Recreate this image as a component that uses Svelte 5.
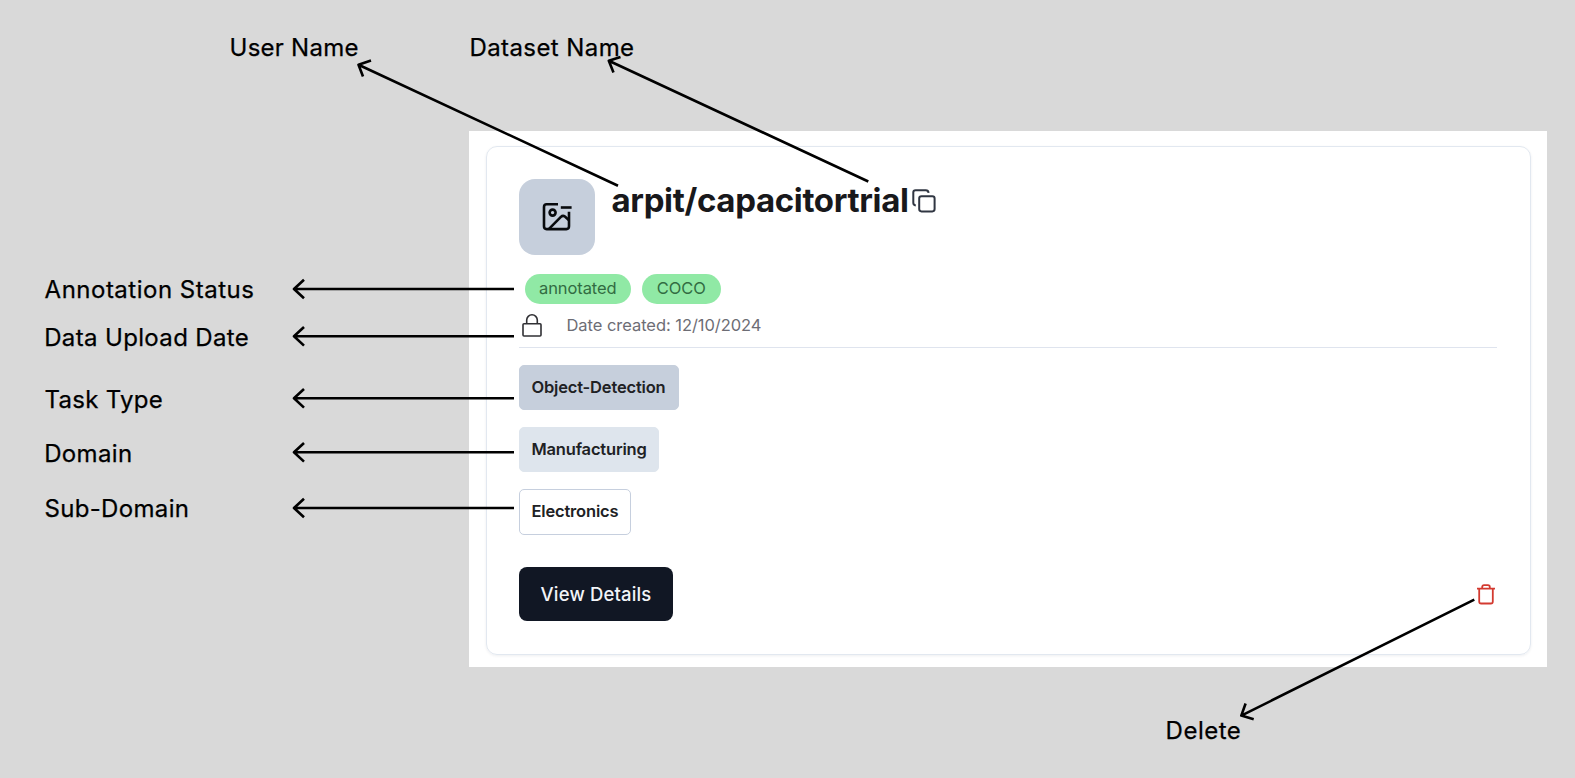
<script>
  const labels = [
    { text: 'User Name', x: 229.6, y: 33, spacing: 0.24 },
    { text: 'Dataset Name', x: 469.4, y: 33, spacing: 0.42 },
    { text: 'Annotation Status', x: 44.6, y: 275, spacing: 0.5 },
    { text: 'Data Upload Date', x: 44.2, y: 322.5, spacing: 0.35 },
    { text: 'Task Type', x: 44.6, y: 384.5, spacing: 0.28 },
    { text: 'Domain', x: 44.2, y: 438.5, spacing: 0.36 },
    { text: 'Sub-Domain', x: 44.4, y: 494, spacing: 0.34 },
    { text: 'Delete', x: 1165.6, y: 716, spacing: 0.5 }
  ];
  const rows = [289, 336.3, 398.3, 452.3, 508];
  const arrows = [
    'M618 185.7L358.5 64.7M371 60.5L358.5 64.7L363 76.5',
    'M868.3 181.5L608.8 60.7M620.5 57L608.8 60.7L613.5 72.5',
    'M1474.3 599.7L1241.3 715.6M1245.6 703.5L1241.3 715.6L1253.7 719.2',
    ...rows.map((y) => `M514 ${y}H294M304 ${y - 9.3}L294 ${y}L304 ${y + 9.3}`)
  ];
  const tags = [
    { text: 'Object-Detection', kind: 'task', width: 160 },
    { text: 'Manufacturing', kind: 'domain', width: 139.5 },
    { text: 'Electronics', kind: 'sub', width: 112 }
  ];
</script>

<main>
  <section class="panel">
    <article class="card">
      <header>
        <div class="tile">
          <svg width="30" height="30" viewBox="0 0 30 30" fill="none" stroke="#080a0d" stroke-width="2.6" stroke-linejoin="round">
            <path d="M16 2.3H4.6Q2 2.3 2 4.9V24.3Q2 27.1 4.6 27.1H24.4Q27 27.1 27 24.3V9.8" />
            <path d="M18.8 5.5H29.6" />
            <circle cx="10.6" cy="10.6" r="3" />
            <path d="M7 26.8L18.9 14.9Q20.9 13 22.9 14.6L27 18.2" />
          </svg>
        </div>
        <h1>arpit/capacitortrial</h1>
        <svg class="copy" width="24" height="24" viewBox="0 0 24 24" fill="none" stroke="#303642" stroke-width="2">
          <rect x="7.2" y="7.2" width="15.4" height="15.2" rx="2.3" />
          <path d="M3.8 16.6Q1.3 16.2 1.3 13.8V3.6Q1.3 1.3 3.6 1.3H13.8Q16.3 1.3 16.6 3.8" />
        </svg>
      </header>
      <div class="pills">
        <span class="pill annotated">annotated</span>
        <span class="pill coco">COCO</span>
      </div>
      <div class="date">
        <svg width="20" height="24" viewBox="0 0 20 24" fill="none" stroke="#303034" stroke-width="1.6">
          <rect x="1" y="10.8" width="18" height="12.2" rx="1" />
          <path d="M4.7 10.6V7.1a5.3 5.3 0 0 1 10.6 0V10.6" />
        </svg>
        <span>Date created: 12/10/2024</span>
      </div>
      <div class="tags">
        {#each tags as tag}
          <span class="tag {tag.kind}" style="width: {tag.width}px">{tag.text}</span>
        {/each}
      </div>
      <footer>
        <button class="view">View Details</button>
        <svg class="trash" width="18" height="21" viewBox="0 0 18 21" fill="none" stroke="#d33a30" stroke-width="1.8">
          <path d="M0 4.7H18M5.2 4.5V3Q5.2 1.1 7.1 1.1H10.9Q12.8 1.1 12.8 3V4.5" />
          <path d="M2.2 4.7V17.4Q2.2 19.5 4.2 19.5H13.8Q15.8 19.5 15.8 17.4V4.7" />
        </svg>
      </footer>
    </article>
  </section>

  <svg class="arrows" width="1575" height="778" viewBox="0 0 1575 778" fill="none" stroke="#000" stroke-width="2.6" stroke-linejoin="round">
    {#each arrows as d}
      <path {d} />
    {/each}
  </svg>
  {#each labels as label}
    <span class="label" style="left: {label.x}px; top: {label.y}px; letter-spacing: {label.spacing}px">{label.text}</span>
  {/each}
</main>

<style>
  main {
    position: relative;
    box-sizing: border-box;
    width: 1575px;
    height: 778px;
    padding: 131px 0 0 469px;
    overflow: hidden;
    background: #d9d9d9;
    font-family: Inter, sans-serif;
    color: #18181b;
  }
  .panel {
    box-sizing: border-box;
    width: 1078px;
    height: 536px;
    padding: 15px 16px 0 16.5px;
    background: #fff;
  }
  .card {
    box-sizing: border-box;
    width: 1045px;
    height: 509px;
    border: 1.5px solid #e2e8f0;
    border-radius: 11px;
    padding: 32px 32.5px 0 32.5px;
    box-shadow: 0 1px 3px rgba(20, 30, 50, 0.07);
  }
  header {
    display: flex;
    align-items: flex-start;
    height: 76px;
  }
  .tile {
    display: grid;
    place-items: center;
    width: 76px;
    height: 76px;
    border-radius: 16px;
    background: #c6cfdc;
  }
  h1 {
    width: 299px;
    margin: 1px 0 0 16.5px;
    font-size: 33px;
    font-weight: 700;
    line-height: 40px;
    letter-spacing: -0.34px;
    white-space: nowrap;
  }
  .copy {
    margin: 10px 0 0 1px;
  }
  .pills {
    display: flex;
    gap: 11px;
    height: 30px;
    margin: 18.5px 0 0 5.5px;
  }
  .pill {
    display: flex;
    align-items: center;
    justify-content: center;
    border-radius: 15px;
    background: #90e9a5;
    color: #326c42;
    font-size: 16.5px;
    line-height: 28px;
    letter-spacing: -0.1px;
    padding-bottom: 1px;
    box-sizing: border-box;
  }
  .annotated {
    width: 106.5px;
  }
  .coco {
    width: 78.5px;
  }
  .date {
    display: flex;
    align-items: center;
    gap: 24.5px;
    box-sizing: border-box;
    height: 44px;
    padding: 0 0 1px 3px;
    border-bottom: 1.5px solid #dfe4ee;
    color: #6d6d75;
    font-size: 16.5px;
    letter-spacing: -0.05px;
  }
  .tags {
    display: flex;
    flex-direction: column;
    gap: 16.5px;
    margin-top: 17px;
  }
  .tag {
    display: flex;
    align-items: center;
    box-sizing: border-box;
    height: 45.7px;
    padding: 0 0 1px 11.5px;
    border: 1px solid transparent;
    border-radius: 5px;
    font-size: 16.5px;
    font-weight: 600;
    letter-spacing: -0.18px;
    color: #202124;
  }
  .task {
    background: #c6cfdc;
    border-color: #c6cfdc;
  }
  .domain {
    background: #dee5ed;
    border-color: #dee5ed;
  }
  .sub {
    border-color: #c6cfde;
  }
  footer {
    display: flex;
    align-items: center;
    justify-content: space-between;
    margin-top: 32.5px;
    padding-right: 2px;
  }
  .view {
    width: 154px;
    height: 54px;
    padding: 0;
    border: 0;
    border-radius: 8px;
    background: #111724;
    color: #f2f4f8;
    font: 500 18.5px Inter, sans-serif;
    letter-spacing: 0.15px;
  }
  .trash {
    margin-top: 1px;
  }
  .arrows {
    position: absolute;
    left: 0;
    top: 0;
  }
  .label {
    position: absolute;
    font-size: 24px;
    font-weight: 400;
    line-height: 30px;
    color: #000;
    white-space: nowrap;
    -webkit-text-stroke: 0.25px #000;
  }
</style>
